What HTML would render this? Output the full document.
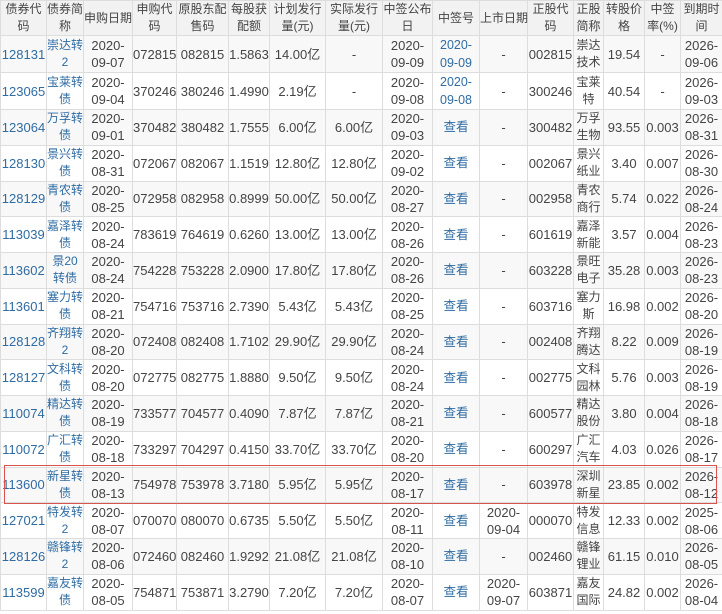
<!DOCTYPE html>
<html><head><meta charset="utf-8"><style>
body{margin:0;background:#fff;font-family:"Liberation Sans","Noto Sans CJK SC",sans-serif;font-size:13px;color:#444;}
table{border-collapse:collapse;table-layout:fixed;width:722px;}
td,th{border:1px solid #ddd;padding:0;text-align:center;line-height:17px;height:34.75px;white-space:nowrap;overflow:visible;font-weight:normal;}
th{background:#f2f2f2;height:34px;font-size:12px;}
td:nth-child(2),td:nth-child(13){font-size:12px;}
td:nth-child(10) a{font-size:12.5px;}
tr:nth-child(odd) td{background:#f8f8f8;}
a{color:#2f6ca3;text-decoration:none;}
.box{position:absolute;left:4px;top:465px;width:713px;height:39px;border:1px solid #d9534f;box-sizing:border-box;}
</style></head><body>
<div style="position:relative">
<table>
<colgroup><col style="width:46px"><col style="width:37px"><col style="width:49px"><col style="width:44px"><col style="width:52px"><col style="width:41px"><col style="width:56px"><col style="width:57px"><col style="width:50px"><col style="width:47px"><col style="width:48px"><col style="width:46px"><col style="width:30px"><col style="width:41px"><col style="width:36px"><col style="width:42px"></colgroup>
<thead><tr><th>债券代<br>码</th><th>债券简<br>称</th><th>申购日期</th><th>申购代<br>码</th><th>原股东配<br>售码</th><th>每股获<br>配额</th><th>计划发行<br>量(元)</th><th>实际发行<br>量(元)</th><th>中签公布<br>日</th><th>中签号</th><th>上市日期</th><th>正股代<br>码</th><th>正股<br>简称</th><th>转股价<br>格</th><th>中签<br>率(%)</th><th>到期时<br>间</th></tr></thead>
<tbody>
<tr><td><a>128131</a></td><td><a>崇达转<br>2</a></td><td>2020-<br>09-07</td><td>072815</td><td>082815</td><td>1.5863</td><td>14.00亿</td><td>-</td><td>2020-<br>09-09</td><td><a>2020-<br>09-09</a></td><td>-</td><td>002815</td><td>崇达<br>技术</td><td>19.54</td><td>-</td><td>2026-<br>09-06</td></tr>
<tr><td><a>123065</a></td><td><a>宝莱转<br>债</a></td><td>2020-<br>09-04</td><td>370246</td><td>380246</td><td>1.4990</td><td>2.19亿</td><td>-</td><td>2020-<br>09-08</td><td><a>2020-<br>09-08</a></td><td>-</td><td>300246</td><td>宝莱<br>特</td><td>40.54</td><td>-</td><td>2026-<br>09-03</td></tr>
<tr><td><a>123064</a></td><td><a>万孚转<br>债</a></td><td>2020-<br>09-01</td><td>370482</td><td>380482</td><td>1.7555</td><td>6.00亿</td><td>6.00亿</td><td>2020-<br>09-03</td><td><a>查看</a></td><td>-</td><td>300482</td><td>万孚<br>生物</td><td>93.55</td><td>0.003</td><td>2026-<br>08-31</td></tr>
<tr><td><a>128130</a></td><td><a>景兴转<br>债</a></td><td>2020-<br>08-31</td><td>072067</td><td>082067</td><td>1.1519</td><td>12.80亿</td><td>12.80亿</td><td>2020-<br>09-02</td><td><a>查看</a></td><td>-</td><td>002067</td><td>景兴<br>纸业</td><td>3.40</td><td>0.007</td><td>2026-<br>08-30</td></tr>
<tr><td><a>128129</a></td><td><a>青农转<br>债</a></td><td>2020-<br>08-25</td><td>072958</td><td>082958</td><td>0.8999</td><td>50.00亿</td><td>50.00亿</td><td>2020-<br>08-27</td><td><a>查看</a></td><td>-</td><td>002958</td><td>青农<br>商行</td><td>5.74</td><td>0.022</td><td>2026-<br>08-24</td></tr>
<tr><td><a>113039</a></td><td><a>嘉泽转<br>债</a></td><td>2020-<br>08-24</td><td>783619</td><td>764619</td><td>0.6260</td><td>13.00亿</td><td>13.00亿</td><td>2020-<br>08-26</td><td><a>查看</a></td><td>-</td><td>601619</td><td>嘉泽<br>新能</td><td>3.57</td><td>0.004</td><td>2026-<br>08-23</td></tr>
<tr><td><a>113602</a></td><td><a>景20<br>转债</a></td><td>2020-<br>08-24</td><td>754228</td><td>753228</td><td>2.0900</td><td>17.80亿</td><td>17.80亿</td><td>2020-<br>08-26</td><td><a>查看</a></td><td>-</td><td>603228</td><td>景旺<br>电子</td><td>35.28</td><td>0.003</td><td>2026-<br>08-23</td></tr>
<tr><td><a>113601</a></td><td><a>塞力转<br>债</a></td><td>2020-<br>08-21</td><td>754716</td><td>753716</td><td>2.7390</td><td>5.43亿</td><td>5.43亿</td><td>2020-<br>08-25</td><td><a>查看</a></td><td>-</td><td>603716</td><td>塞力<br>斯</td><td>16.98</td><td>0.002</td><td>2026-<br>08-20</td></tr>
<tr><td><a>128128</a></td><td><a>齐翔转<br>2</a></td><td>2020-<br>08-20</td><td>072408</td><td>082408</td><td>1.7102</td><td>29.90亿</td><td>29.90亿</td><td>2020-<br>08-24</td><td><a>查看</a></td><td>-</td><td>002408</td><td>齐翔<br>腾达</td><td>8.22</td><td>0.009</td><td>2026-<br>08-19</td></tr>
<tr><td><a>128127</a></td><td><a>文科转<br>债</a></td><td>2020-<br>08-20</td><td>072775</td><td>082775</td><td>1.8880</td><td>9.50亿</td><td>9.50亿</td><td>2020-<br>08-24</td><td><a>查看</a></td><td>-</td><td>002775</td><td>文科<br>园林</td><td>5.76</td><td>0.003</td><td>2026-<br>08-19</td></tr>
<tr><td><a>110074</a></td><td><a>精达转<br>债</a></td><td>2020-<br>08-19</td><td>733577</td><td>704577</td><td>0.4090</td><td>7.87亿</td><td>7.87亿</td><td>2020-<br>08-21</td><td><a>查看</a></td><td>-</td><td>600577</td><td>精达<br>股份</td><td>3.80</td><td>0.004</td><td>2026-<br>08-18</td></tr>
<tr><td><a>110072</a></td><td><a>广汇转<br>债</a></td><td>2020-<br>08-18</td><td>733297</td><td>704297</td><td>0.4150</td><td>33.70亿</td><td>33.70亿</td><td>2020-<br>08-20</td><td><a>查看</a></td><td>-</td><td>600297</td><td>广汇<br>汽车</td><td>4.03</td><td>0.026</td><td>2026-<br>08-17</td></tr>
<tr><td><a>113600</a></td><td><a>新星转<br>债</a></td><td>2020-<br>08-13</td><td>754978</td><td>753978</td><td>3.7180</td><td>5.95亿</td><td>5.95亿</td><td>2020-<br>08-17</td><td><a>查看</a></td><td>-</td><td>603978</td><td>深圳<br>新星</td><td>23.85</td><td>0.002</td><td>2026-<br>08-12</td></tr>
<tr><td><a>127021</a></td><td><a>特发转<br>2</a></td><td>2020-<br>08-07</td><td>070070</td><td>080070</td><td>0.6735</td><td>5.50亿</td><td>5.50亿</td><td>2020-<br>08-11</td><td><a>查看</a></td><td>2020-<br>09-04</td><td>000070</td><td>特发<br>信息</td><td>12.33</td><td>0.002</td><td>2025-<br>08-06</td></tr>
<tr><td><a>128126</a></td><td><a>赣锋转<br>2</a></td><td>2020-<br>08-06</td><td>072460</td><td>082460</td><td>1.9292</td><td>21.08亿</td><td>21.08亿</td><td>2020-<br>08-10</td><td><a>查看</a></td><td>-</td><td>002460</td><td>赣锋<br>锂业</td><td>61.15</td><td>0.010</td><td>2026-<br>08-05</td></tr>
<tr><td><a>113599</a></td><td><a>嘉友转<br>债</a></td><td>2020-<br>08-05</td><td>754871</td><td>753871</td><td>3.2790</td><td>7.20亿</td><td>7.20亿</td><td>2020-<br>08-07</td><td><a>查看</a></td><td>2020-<br>09-07</td><td>603871</td><td>嘉友<br>国际</td><td>24.82</td><td>0.002</td><td>2026-<br>08-04</td></tr>
</tbody></table>
<div class="box"></div>
</div>
</body></html>
